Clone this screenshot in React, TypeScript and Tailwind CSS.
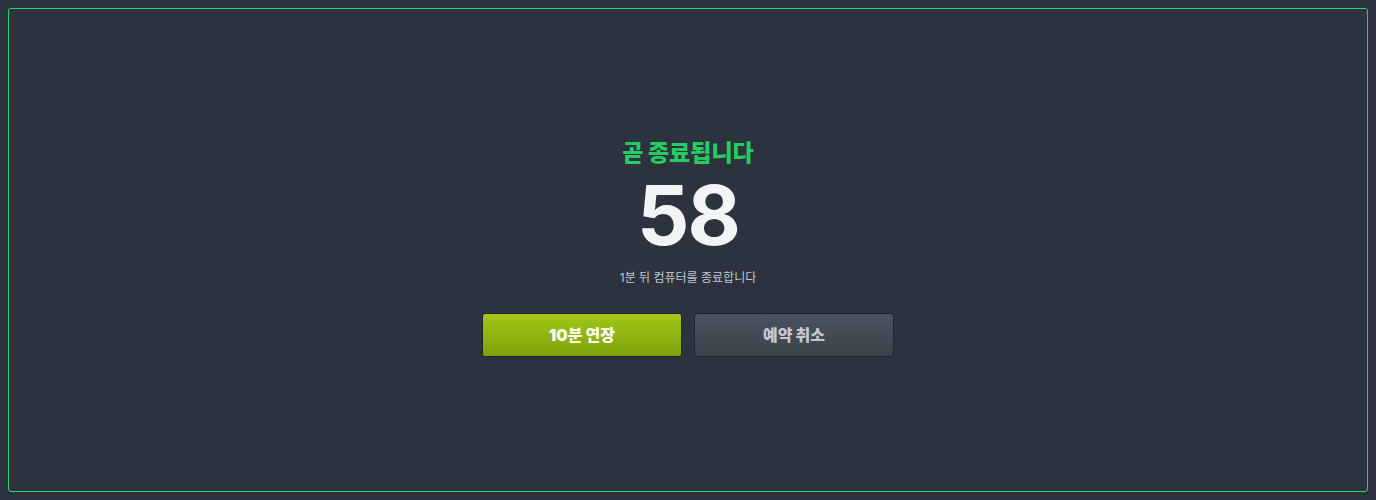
import React from "react";

export default function App() {
  return (
    <div
      className="w-[1376px] h-[500px] bg-[#2d333e] p-2"
      style={{ fontFamily: 'Inter, "Noto Sans CJK KR", sans-serif' }}
    >
      <div className="h-full w-full rounded-[3px] border border-[#22d462] flex flex-col items-center pt-[130px]">
        <div className="text-[23px] leading-[28px] font-black text-[#26cc62]">곧 종료됩니다</div>
        <div className="text-[82px] leading-[90px] font-bold text-[#f3f4f6] tracking-[-2px] mt-[4px]">58</div>
        <div className="text-[12px] leading-[16px] text-[#c3c7ce] mt-[9px]">1분 뒤 컴퓨터를 종료합니다</div>
        <div className="flex gap-[12px] mt-[27px]">
          <button className="w-[200px] h-[44px] rounded-[3px] border border-[#1f2530] bg-gradient-to-b from-[#a3c617] to-[#7ea308] text-white text-[16px] font-black">
            10분 연장
          </button>
          <button className="w-[200px] h-[44px] rounded-[3px] border border-[#1f2530] bg-gradient-to-b from-[#4b535e] to-[#3b424c] text-[#c4c9d0] text-[16px] font-black">
            예약 취소
          </button>
        </div>
      </div>
    </div>
  );
}
